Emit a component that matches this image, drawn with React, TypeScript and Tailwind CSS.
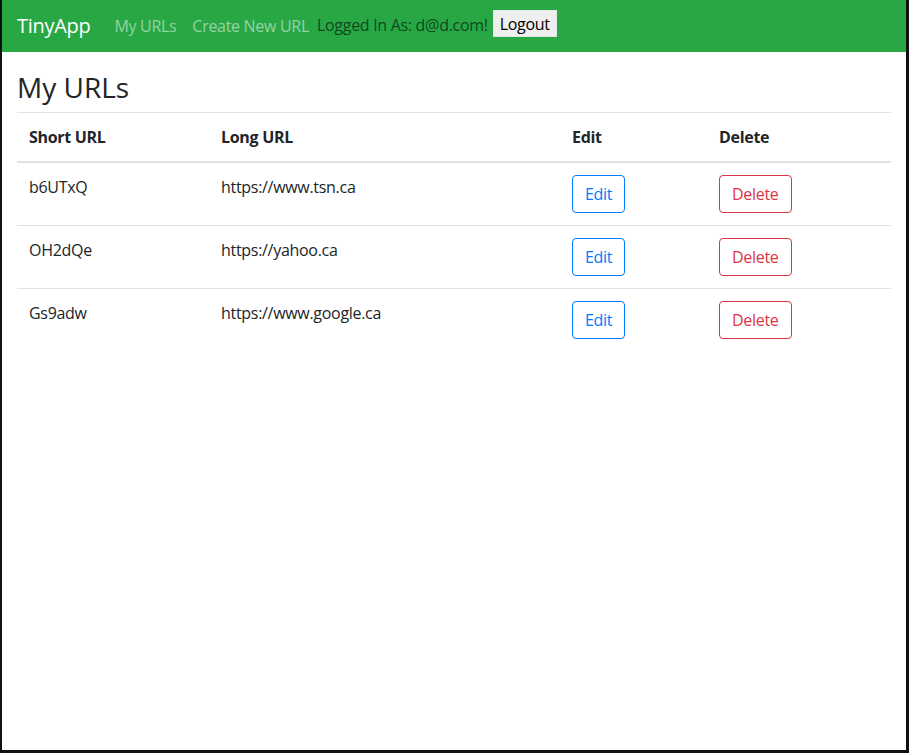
import React from "react";

const urls = [
  { short: "b6UTxQ", long: "https://www.tsn.ca" },
  { short: "OH2dQe", long: "https://yahoo.ca" },
  { short: "Gs9adw", long: "https://www.google.ca" },
];

export default function App() {
  return (
    <div
      className="h-[753px] flex flex-col bg-white border-l-2 border-r-[3px] border-b-[3px] border-[#111] text-[#212529] text-base tracking-[-0.3px] overflow-hidden"
      style={{ fontFamily: '"Open Sans", "Noto Sans", sans-serif' }}
    >
      {/* NAVBAR */}
      <nav className="h-[52px] bg-[#28a745] flex items-center px-[15px] shrink-0">
        <a className="text-xl text-white mr-4 leading-[30px] -mt-px">TinyApp</a>
        <ul className="flex items-center -mt-px">
          <li>
            <a className="px-2 text-white/50">My URLs</a>
          </li>
          <li>
            <a className="px-2 text-white/50">Create New URL</a>
          </li>
        </ul>
        <span className="text-black/60 -mt-[2px]">Logged In As: d@d.com!</span>
        <button className="self-start mt-[10px] ml-[5px] h-[27px] px-[6px] bg-[#efefef] text-black border border-[#e5e5e5]">
          Logout
        </button>
      </nav>

      {/* MAIN */}
      <main className="px-[15px] pt-[18px]">
        <h3 className="text-[28px] leading-[34px] font-medium tracking-normal mb-2">My URLs</h3>
        <table className="w-full border-collapse text-left">
          <thead>
            <tr className="border-t border-[#dee2e6]">
              <th className="w-[192px] p-3 font-bold align-bottom border-b-2 border-[#dee2e6]">Short URL</th>
              <th className="w-[351px] p-3 font-bold align-bottom border-b-2 border-[#dee2e6]">Long URL</th>
              <th className="w-[147px] p-3 font-bold align-bottom border-b-2 border-[#dee2e6]">Edit</th>
              <th className="p-3 font-bold align-bottom border-b-2 border-[#dee2e6]">Delete</th>
            </tr>
          </thead>
          <tbody>
            {urls.map((u, i) => (
              <tr key={u.short} className={i > 0 ? "border-t border-[#dee2e6]" : ""}>
                <td className="p-3 align-top">{u.short}</td>
                <td className="p-3 align-top">{u.long}</td>
                <td className="p-3 align-top">
                  <button className="h-[38px] px-3 border border-[#007bff] text-[#007bff] rounded">
                    Edit
                  </button>
                </td>
                <td className="p-3 align-top">
                  <button className="h-[38px] px-3 border border-[#dc3545] text-[#dc3545] rounded">
                    Delete
                  </button>
                </td>
              </tr>
            ))}
          </tbody>
        </table>
      </main>
    </div>
  );
}
